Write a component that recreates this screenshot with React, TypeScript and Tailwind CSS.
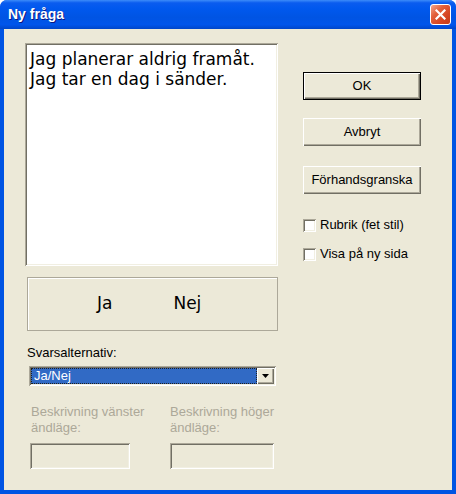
import React from 'react';

const ui = { fontFamily: '"Liberation Sans", Arial, sans-serif' };
const content = { fontFamily: '"DejaVu Sans", Verdana, sans-serif' };

const sunken =
  'shadow-[inset_1px_1px_0_#ACA899,inset_-1px_-1px_0_#ffffff,inset_2px_2px_0_#716F64,inset_-2px_-2px_0_#F1EFE2]';
const raised =
  'shadow-[inset_1px_1px_0_#ffffff,inset_-1px_-1px_0_#716F64,inset_-2px_-2px_0_#ACA899]';

function Button({ label, isDefault, className = '' }: { label: string; isDefault?: boolean; className?: string }) {
  if (isDefault) {
    return (
      <div className={`h-[28px] w-[118px] border border-black bg-[#ECE9D8] ${className}`}>
        <div className={`flex h-full w-full items-center justify-center text-[13px] text-black ${raised}`}>{label}</div>
      </div>
    );
  }
  return (
    <div className={`flex h-[28px] w-[118px] items-center justify-center bg-[#ECE9D8] text-[13px] text-black ${raised} ${className}`}>
      {label}
    </div>
  );
}

function Checkbox({ label, className = '' }: { label: string; className?: string }) {
  return (
    <div className={`flex items-center gap-[4px] ${className}`}>
      <div className={`h-[13px] w-[13px] bg-white ${sunken}`} />
      <span className="text-[13px] leading-[16px] text-black">{label}</span>
    </div>
  );
}

export default function App() {
  return (
    <div className="flex h-[494px] w-[456px] flex-col overflow-hidden rounded-t-[7px] bg-[#0054E3]" style={ui}>
      {/* title bar */}
      <div className="flex h-[29px] shrink-0 items-center justify-between bg-[linear-gradient(to_bottom,#3C8CF9_0%,#0A5CEF_10%,#0058EE_30%,#0054E3_60%,#0055EB_85%,#0046C9_100%)] pl-[8px] pr-[5px]">
        <span className="text-[14px] font-bold text-white [text-shadow:1px_1px_0_#0A1883]">Ny fråga</span>
        <div className="flex h-[21px] w-[21px] items-center justify-center rounded-[3px] border border-white bg-[linear-gradient(135deg,#F4A68C_0%,#E2603A_35%,#D54422_70%,#C23A18_100%)]">
          <svg width="11" height="11" viewBox="0 0 11 11">
            <path d="M1.5 1.5 L9.5 9.5 M9.5 1.5 L1.5 9.5" stroke="#fff" strokeWidth="2.2" strokeLinecap="square" />
          </svg>
        </div>
      </div>

      {/* client */}
      <div className="mx-[4px] mb-[4px] flex flex-1 bg-[#ECE9D8] pl-[21px] pt-[14px]">
        <div className="flex w-[257px] flex-col">
          <div className={`h-[223px] w-[253px] bg-white px-[5px] pt-[6px] text-[17px] leading-[20px] text-black ${sunken}`} style={content}>
            <div>Jag planerar aldrig framåt.</div>
            <div>Jag tar en dag i sänder.</div>
          </div>

          <div className="ml-[2px] mt-[11px] flex h-[54px] w-[251px] items-center border border-[#ACA899] text-[17px] text-black shadow-[inset_1px_1px_0_#ffffff]" style={content}>
            <span className="ml-[69px]">Ja</span>
            <span className="ml-[61px]">Nej</span>
          </div>

          <div className="ml-[2px] mt-[14px] text-[13px] leading-[16px] text-black">Svarsalternativ:</div>

          <div className={`ml-[4px] mt-[5px] flex h-[20px] w-[247px] items-stretch bg-white p-[2px] ${sunken}`}>
            <div className="flex flex-1 items-center border border-dotted border-[#202020] bg-[#316AC5] pl-[2px] text-[13px] text-white">
              Ja/Nej
            </div>
            <div className={`flex w-[17px] items-center justify-center bg-[#ECE9D8] ${raised}`}>
              <svg width="7" height="4" viewBox="0 0 7 4">
                <path d="M0 0 H7 L3.5 4 Z" fill="#000" />
              </svg>
            </div>
          </div>

          <div className="ml-[6px] mt-[18px] flex text-[13px] leading-[16px] text-[#ACA899]">
            <div className="w-[139px]">
              Beskrivning vänster
              <br />
              ändläge:
            </div>
            <div>
              Beskrivning höger
              <br />
              ändläge:
            </div>
          </div>

          <div className="ml-[5px] mt-[7px] flex">
            <div className={`h-[26px] w-[100px] bg-[#ECE9D8] ${sunken}`} />
            <div className={`ml-[40px] h-[26px] w-[104px] bg-[#ECE9D8] ${sunken}`} />
          </div>
        </div>

        <div className="ml-[21px] mt-[29px] flex flex-col">
          <Button label="OK" isDefault />
          <Button label="Avbryt" className="mt-[18px]" />
          <Button label="Förhandsgranska" className="mt-[20px]" />
          <Checkbox label="Rubrik (fet stil)" className="mt-[23px]" />
          <Checkbox label="Visa på ny sida" className="mt-[13px]" />
        </div>
      </div>
    </div>
  );
}
